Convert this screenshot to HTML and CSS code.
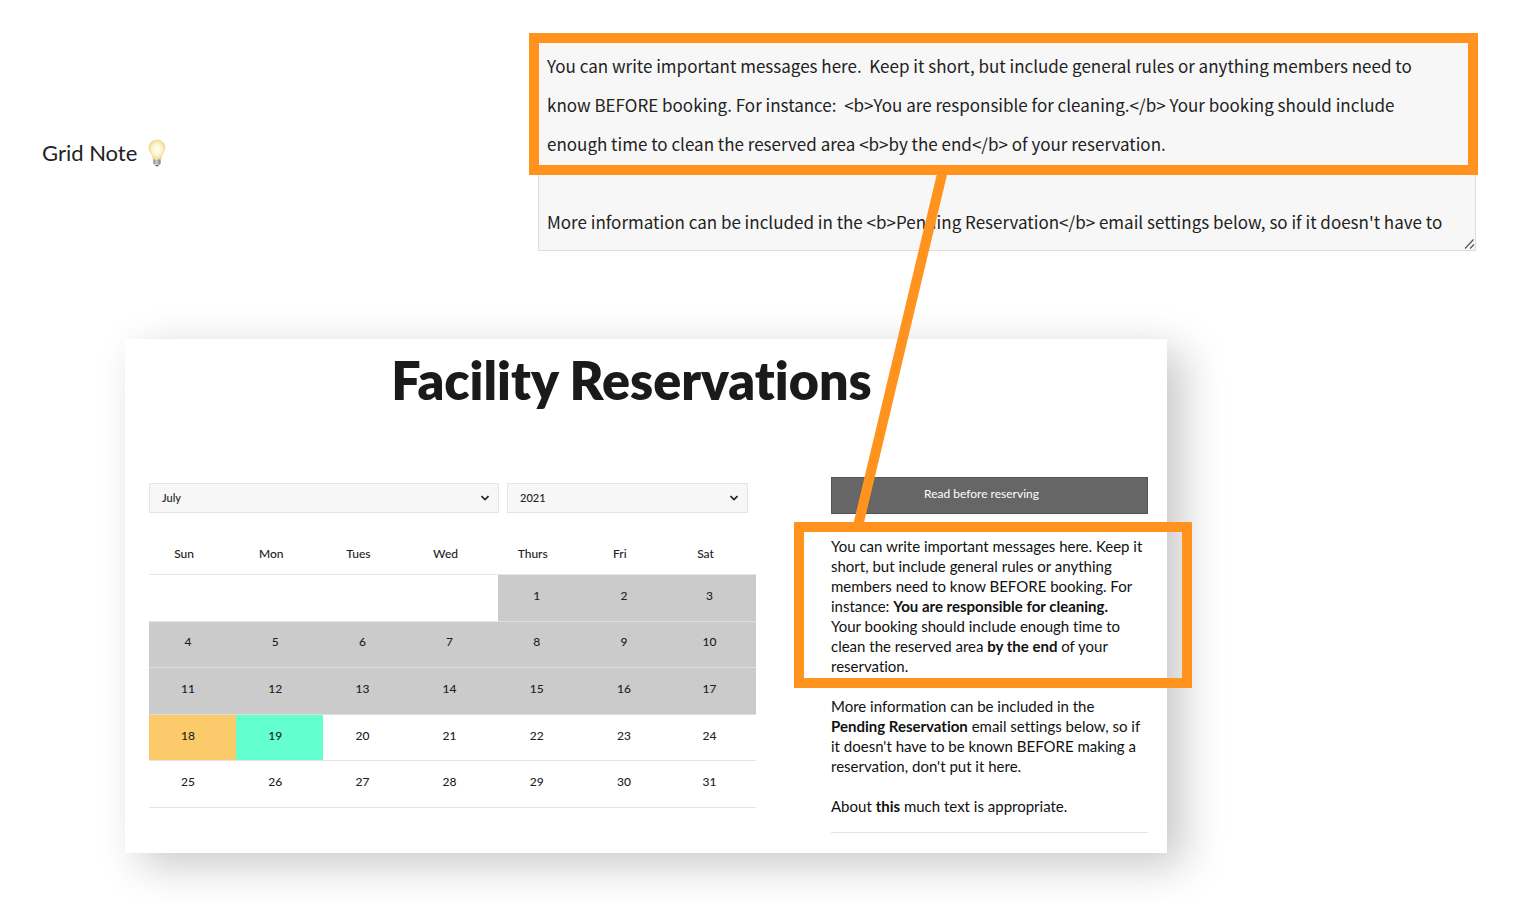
FILE: index.html
```
<!DOCTYPE html>
<html lang="en">
<head>
  <meta charset="UTF-8" />
  <meta name="viewport" content="width=device-width, initial-scale=1.0"/>
  <title>Facility Reservations</title>
  <link rel="stylesheet" href="styles.css">
</head>
<body>
  <main class="page">
    <section class="setting">
      <label class="setting-label" for="gridNote">
        Grid Note
        <svg class="bulb" viewBox="0 0 18 28" aria-hidden="true">
          <defs>
            <radialGradient id="glow" cx="50%" cy="50%" r="55%">
              <stop offset="0" stop-color="#fffef4"/>
              <stop offset="0.55" stop-color="#fdf5cf"/>
              <stop offset="1" stop-color="#efd583"/>
            </radialGradient>
            <linearGradient id="metal">
              <stop offset="0" stop-color="#777"/>
              <stop offset="0.4" stop-color="#eee"/>
              <stop offset="1" stop-color="#777"/>
            </linearGradient>
          </defs>
          <path d="M9 1C4.400 1 1 4.200 1 8.600c0 3 1.700 4.900 2.900 7.200.8 1.500 1 3 1.300 4.400h7.600c.3-1.400.5-2.900 1.300-4.400C15.300 13.500 17 11.600 17 8.600 17 4.200 13.600 1 9 1z" fill="url(#glow)" stroke="#ecd58c" stroke-width="0.600"/>
          <path d="M5.500 20.200h7v4.300L11 26.200a3 1.600 0 0 1-4 0l-1.500-1.700z" fill="url(#metal)"/>
          <path d="M5.500 22h7M5.700 24h6.600" stroke="#888" stroke-width="0.600"/>
          <path d="M7.300 26h3.400l-.8 1.300H8.100z" fill="#555"/>
        </svg>
      </label>
      <div class="setting-field">
        <textarea id="gridNote" class="note-input" rows="5" spellcheck="false">You can write important messages here.  Keep it short, but include general rules or anything members need to know BEFORE booking. For instance:  &lt;b&gt;You are responsible for cleaning.&lt;/b&gt; Your booking should include enough time to clean the reserved area &lt;b&gt;by the end&lt;/b&gt; of your reservation.

More information can be included in the &lt;b&gt;Pending Reservation&lt;/b&gt; email settings below, so if it doesn't have to</textarea>
        <svg class="grip" viewBox="0 0 12 12" aria-hidden="true"><path d="M1 10.500L9.500 1.500M6 10.500L10 6.500"/></svg>
      </div>
    </section>

    <section class="card">
      <h1>Facility Reservations</h1>
      <div class="columns">
        <div class="calendar">
          <div class="filters">
            <div class="select select-month">
              <select aria-label="Month">
                <option>July</option>
              </select>
              <svg class="chevron" viewBox="0 0 8 6" aria-hidden="true"><path d="M0.500 1l3.500 3.500L7.500 1"/></svg>
            </div>
            <div class="select select-year">
              <select aria-label="Year">
                <option>2021</option>
              </select>
              <svg class="chevron" viewBox="0 0 8 6" aria-hidden="true"><path d="M0.500 1l3.500 3.500L7.500 1"/></svg>
            </div>
          </div>

          <table class="days">
            <thead>
              <tr><th>Sun</th><th>Mon</th><th>Tues</th><th>Wed</th><th>Thurs</th><th>Fri</th><th>Sat</th></tr>
            </thead>
            <tbody>
              <tr><td></td><td></td><td></td><td></td><td class="past">1</td><td class="past">2</td><td class="past">3</td></tr>
              <tr><td class="past">4</td><td class="past">5</td><td class="past">6</td><td class="past">7</td><td class="past">8</td><td class="past">9</td><td class="past">10</td></tr>
              <tr><td class="past">11</td><td class="past">12</td><td class="past">13</td><td class="past">14</td><td class="past">15</td><td class="past">16</td><td class="past">17</td></tr>
              <tr><td class="today">18</td><td class="selected">19</td><td>20</td><td>21</td><td>22</td><td>23</td><td>24</td></tr>
              <tr><td>25</td><td>26</td><td>27</td><td>28</td><td>29</td><td>30</td><td>31</td></tr>
            </tbody>
          </table>
        </div>

        <aside class="info">
          <button class="read-button" type="button">Read before reserving</button>
          <div class="note">
            <p class="note-main">You can write important messages here. Keep it short, but include general rules or anything members need to know BEFORE booking. For instance: <b>You are responsible for cleaning.</b><br>Your booking should include enough time to clean the reserved area <b>by the end</b> of your reservation.</p>
            <p>More information can be included in the <b>Pending Reservation</b> email settings below, so if it doesn't have to be known BEFORE making a reservation, don't put it here.</p>
            <p>About <b>this</b> much text is appropriate.</p>
          </div>
        </aside>
      </div>
    </section>

    <!-- line joining the two highlighted notes -->
    <svg class="connector" viewBox="0 0 100 360" aria-hidden="true"><path d="M93 0L8 356"/></svg>
  </main>
</body>
</html>
```

FILE: styles.css
```
:root {
  --fg: #222222;
  --accent: #ff931e;
  --field: #f7f7f7;
  --line: #e5e5e5;
}

*,
*::after {
  box-sizing: border-box;
}

body {
  margin: 0;
  font-family: Lato, sans-serif;
  font-variant-ligatures: none;
  background: #ffffff;
  color: var(--fg);
}

.page {
  position: relative;
  padding: 38px 48px 52px 42px;
}

.setting {
  display: flex;
  align-items: center;
}

.setting-label {
  flex: 496;
  display: flex;
  align-items: center;
  gap: 11px;
  padding-top: 16px;
  font-size: 22px;
  line-height: 28px;
}

.bulb {
  width: 18px;
  height: 28px;
}

.setting-field {
  flex: 938;
  position: relative;
}

.note-input {
  display: block;
  width: 100%;
  height: 213px;
  padding: 7px 24px 8px 8px;
  border: 1px solid #dddddd;
  border-radius: 0;
  background: var(--field);
  color: var(--fg);
  font-family: "Noto Sans CJK SC", sans-serif;
  font-size: 17px;
  line-height: 39px;
  overflow: hidden;
  resize: both;
}

.note-input::-webkit-resizer {
  display: none;
}

.grip {
  position: absolute;
  right: 0;
  bottom: 1px;
  width: 12px;
  height: 12px;
  pointer-events: none;
}

.grip path {
  stroke: #555555;
  stroke-width: 1.2;
}

/* orange frames around the same note in both places */
.setting-field::after,
.note-main::after {
  content: "";
  position: absolute;
  border: 10px solid var(--accent);
  pointer-events: none;
}

.setting-field::after {
  top: -5px;
  left: -9px;
  right: -2px;
  height: 142px;
}

.note-main::after {
  top: -14px;
  left: -37px;
  right: -44px;
  bottom: -12px;
}

.connector {
  position: absolute;
  top: 170px;
  left: 850px;
  width: 100px;
  height: 360px;
  pointer-events: none;
}

.connector path {
  stroke: var(--accent);
  stroke-width: 10;
}

.card {
  max-width: 1042px;
  margin: 88px 0 0 83px;
  padding: 11px 19px 20px 24px;
  background: #ffffff;
  box-shadow: 16px 12px 40px rgba(0,0,0,0.22);
}

h1 {
  margin: 0 0 67px;
  padding-right: 34px;
  color: #1a1a1a;
  font-size: 52px;
  font-weight: 800;
  line-height: 60px;
  text-align: center;
}

.columns {
  display: flex;
  gap: 75px;
}

.calendar {
  flex: 607;
  padding-top: 6px;
}

.info {
  flex: 317;
}

.filters {
  display: flex;
  gap: 8px;
  padding-right: 8px;
}

.select {
  position: relative;
}

.select-month {
  flex: 350;
}

.select-year {
  flex: 241;
}

.select select {
  display: block;
  width: 100%;
  height: 30px;
  padding: 0 12px 2px;
  border: 1px solid var(--line);
  border-radius: 0;
  background: var(--field);
  color: var(--fg);
  font-family: inherit;
  font-size: 11px;
  font-weight: 500;
  appearance: none;
}

.chevron {
  position: absolute;
  top: 12px;
  right: 10px;
  width: 8px;
  height: 6px;
  pointer-events: none;
}

.chevron path {
  fill: none;
  stroke: #222222;
  stroke-width: 1.6;
}

.days {
  width: 100%;
  height: 275px;
  margin-top: 20px;
  border-collapse: separate;
  border-spacing: 0;
  table-layout: fixed;
  font-size: 12px;
  line-height: 16px;
  text-align: center;
}

.days th {
  height: 42px;
  padding: 0 17px 0 0;
  border-bottom: 1px solid var(--line);
  font-weight: 500;
}

.days th:last-child {
  width: 84px;
}

.days td {
  padding: 0 9px 4px 0;
  border-bottom: 1px solid var(--line);
  font-weight: 500;
}

.days .past {
  background: #cbcbcb;
  border-bottom-color: #dedede;
}

.days .today {
  background: #fbcb6b;
}

.days .selected {
  background: #63ffcf;
}

.read-button {
  display: block;
  width: 100%;
  height: 37px;
  padding: 0 16px 4px 0;
  border: 1px solid #555555;
  background: #666666;
  color: #ffffff;
  font-family: inherit;
  font-size: 12px;
}

.note {
  margin-top: 22px;
  padding-bottom: 16px;
  border-bottom: 1px solid var(--line);
  color: #111111;
  font-size: 15px;
  line-height: 20px;
}

.note p {
  margin: 0 0 20px;
}

.note p:last-child {
  margin-bottom: 0;
}

.note-main {
  position: relative;
}
```
